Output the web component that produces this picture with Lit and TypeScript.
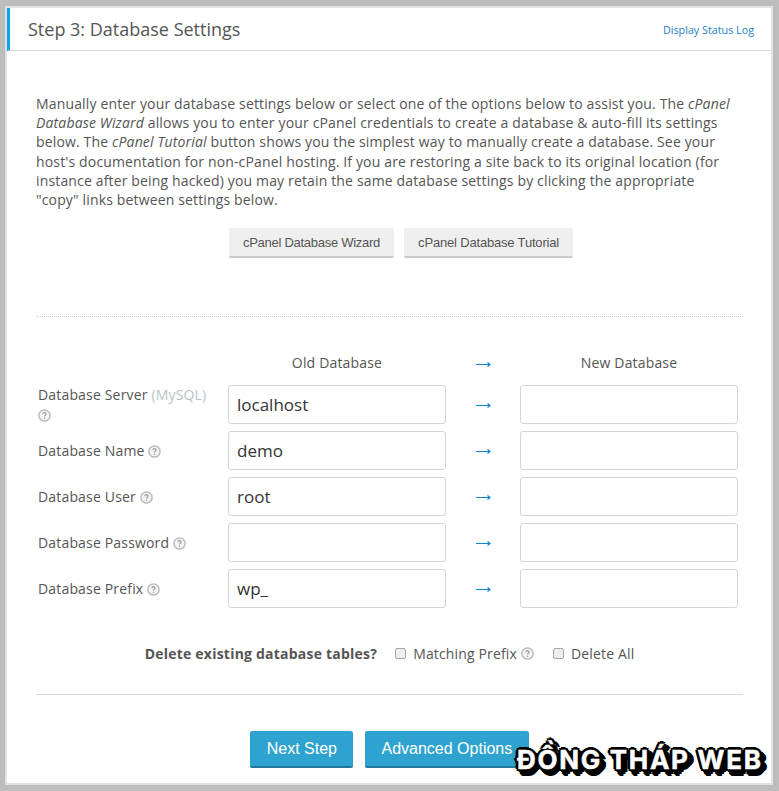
import { LitElement, html, css, svg } from "lit";
import { customElement } from "lit/decorators.js";

const help = html`<svg class="help" viewBox="0 0 13 13" width="13" height="13" aria-hidden="true">
  <circle cx="6.5" cy="6.5" r="5.6" fill="#f4f4f4" stroke="#bcbcbc" stroke-width="1.5"></circle>
  <path d="M4.9 5.2c0-2.1 3.2-2.1 3.2-.1 0 1.1-1.6 1.2-1.6 2.3" fill="none" stroke="#9a9a9a" stroke-width="1.1"></path>
  <circle cx="6.5" cy="9.2" r=".7" fill="#9a9a9a"></circle>
</svg>`;

const arrow = html`<svg class="arrow" viewBox="0 0 15 7" width="15" height="7" aria-hidden="true">
  ${svg`<path d="M0 3.5h14M11.5 1.5l2.5 2-2.5 2" fill="none" stroke="#0f85d0" stroke-width="1.2"></path>`}
</svg>`;

const rows = [
  { label: "Database Server", extra: "(MySQL)", value: "localhost" },
  { label: "Database Name", value: "demo" },
  { label: "Database User", value: "root" },
  { label: "Database Password", value: "" },
  { label: "Database Prefix", value: "wp_" },
];

@customElement("app-root")
export class AppRoot extends LitElement {
  static styles = css`
    :host {
      display: block;
      box-sizing: border-box;
      width: 779px;
      height: 791px;
      padding: 6px 6px 6px 5px;
      background: #bdbdbd;
      font-family: "Open Sans", sans-serif;
      color: #555;
      position: relative;
      overflow: hidden;
    }
    * { box-sizing: border-box; }
    .panel {
      height: 779px;
      background: #fff;
      border: 2px solid #e2e2e2;
      display: flex;
      flex-direction: column;
    }
    .head {
      height: 43px;
      flex: none;
      border-left: 3px solid #0ea5e9;
      border-bottom: 1px solid #d6d6d6;
      display: flex;
      align-items: center;
      justify-content: space-between;
      padding: 0 17px 0 18px;
    }
    .title { font-size: 18px; color: #555; }
    .log { font-size: 10.75px; color: #1b7fc4; text-decoration: none; position: relative; top: 1px; }
    .body { padding: 43px 28px 0 29px; flex: 1; }
    p {
      margin: 0;
      font-size: 14px;
      letter-spacing: 0.15px;
      line-height: 19.2px;
      color: #555;
    }
    .assist {
      display: flex;
      justify-content: center;
      gap: 10px;
      margin-top: 19px;
      padding-left: 23px;
    }
    .btn {
      font-family: "Liberation Sans", sans-serif;
      font-size: 14px;
      border: 0;
      border-radius: 2px;
      display: inline-flex;
      align-items: center;
      justify-content: center;
    }
    .assist .btn {
      height: 30px;
      padding: 0 14px;
      font-size: 13px;
      letter-spacing: -0.18px;
      background: #efefef;
      color: #555;
      border-bottom: 2px solid #c9c9c9;
    }
    .assist .btn.tight { letter-spacing: -0.27px; }
    .dotted { border-top: 1px dotted #c8c8c8; margin-top: 58px; height: 0; }
    .grid {
      display: grid;
      grid-template-columns: 192px 218px 74px 218px;
      grid-template-rows: 30px;
      grid-auto-rows: 39px;
      row-gap: 7px;
      margin-top: 31px;
      align-items: center;
      letter-spacing: 0.17px;
    }
    .grid .hdr { text-align: center; font-size: 14px; padding-bottom: 2px; }
    .lab { font-size: 14px; padding-left: 2px; line-height: 19.5px; }
    .lab .muted { color: #b6c4c4; }
    .help { vertical-align: -2px; }
    .cell {
      height: 39px;
      border: 1px solid #d4d4d4;
      border-radius: 3px;
      padding: 0 8px;
      font-size: 17px;
      line-height: 37px;
      color: #333;
      font-family: "Open Sans", sans-serif;
      width: 100%;
      background: #fff;
      display: block;
      outline: none;
    }
    .arr { text-align: center; line-height: 0; padding-top: 2px; }
    .del {
      display: flex;
      justify-content: center;
      align-items: center;
      font-size: 14px;
      letter-spacing: 0.15px;
      margin-top: 35px;
      height: 20px;
      color: #555;
    }
    .del b { margin-right: 18px; font-weight: 700; letter-spacing: 0.22px; }
    .box {
      width: 11px;
      height: 11px;
      border: 1px solid #a8a8a8;
      border-radius: 2px;
      background: #eee;
      margin-right: 7px;
      flex: none;
    }
    .del .help { margin-left: 4px; margin-right: 19px; vertical-align: 0; }
    .solid { border-top: 1px solid #d6d6d6; margin-top: 31px; height: 0; }
    .actions {
      display: flex;
      justify-content: center;
      gap: 12px;
      margin-top: 36px;
    }
    .actions .btn {
      height: 37px;
      padding: 0 16.25px;
      background: #2ea3cf;
      color: #fff;
      font-size: 16px;
      border-bottom: 2px solid #26759a;
    }
    .mark {
      position: absolute;
      left: 517px;
      top: 741px;
      font-family: "Inter", "Liberation Sans", sans-serif;
      font-weight: 700;
      font-size: 26px;
      line-height: 38px;
      letter-spacing: 1.7px;
      color: #fff;
      white-space: nowrap;
      -webkit-text-stroke: 0.5px #fff;
      text-shadow: -3px 0 0 #000, 3px 0 0 #000, 0 -3px 0 #000, 0 3px 0 #000,
        -2px -2px 0 #000, 2px -2px 0 #000, -2px 2px 0 #000, 2px 2px 0 #000,
        1px 5px 0 #000, 5px 1px 0 #000, 4px 4px 0 #000, 2px 6px 0 #000, 6px 2px 0 #000,
        5px 5px 0 #000, 3px 7px 0 #000, 7px 3px 0 #000;
    }
  `;

  render() {
    return html`
      <div class="panel">
        <div class="head">
          <span class="title">Step 3: Database Settings</span>
          <a class="log">Display Status Log</a>
        </div>
        <div class="body">
          <p>
            Manually enter your database settings below or select one of the options below to assist you. The <i>cPanel</i><br />
            <i>Database Wizard</i> allows you to enter your cPanel credentials to create a database &amp; auto-fill its settings<br />
            below. The <i>cPanel Tutorial</i> button shows you the simplest way to manually create a database. See your<br />
            host's documentation for non-cPanel hosting. If you are restoring a site back to its original location (for<br />
            instance after being hacked) you may retain the same database settings by clicking the appropriate<br />
            "copy" links between settings below.
          </p>
          <div class="assist">
            <span class="btn tight">cPanel Database Wizard</span>
            <span class="btn">cPanel Database Tutorial</span>
          </div>
          <div class="dotted"></div>
          <div class="grid">
            <span></span>
            <span class="hdr">Old Database</span>
            <span class="arr">${arrow}</span>
            <span class="hdr">New Database</span>
            ${rows.map(
              (r) => html`
                <div class="lab">
                  ${r.label}
                  ${r.extra ? html`<span class="muted">${r.extra}</span><br />` : ""}${help}
                </div>
                <input class="cell" .value=${r.value} />
                <span class="arr">${arrow}</span>
                <input class="cell" />
              `
            )}
          </div>
          <div class="del">
            <b>Delete existing database tables?</b>
            <span class="box"></span>Matching Prefix ${help}
            <span class="box"></span>Delete All
          </div>
          <div class="solid"></div>
          <div class="actions">
            <span class="btn">Next Step</span>
            <span class="btn">Advanced Options</span>
          </div>
        </div>
      </div>
      <div class="mark">ĐỒNG THÁP WEB</div>
    `;
  }
}
